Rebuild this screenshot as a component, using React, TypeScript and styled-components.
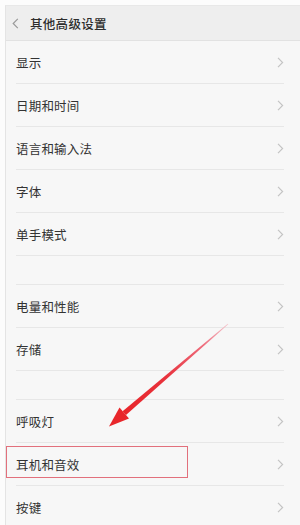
import React from "react";
import styled, { createGlobalStyle } from "styled-components";

const Global = createGlobalStyle`
  html, body { margin: 0; padding: 0; background: #fcfcfc; }
  body { font-family: "Noto Sans CJK SC", "Noto Sans", sans-serif; }
`;

const Screen = styled.div`
  position: relative;
  width: 300px;
  height: 525px;
  overflow: hidden;
  background: #fcfcfc;
  padding-top: 5px;
  padding-left: 5px;
  box-sizing: border-box;
`;

const Frame = styled.div`
  border-left: 1px solid #e4e4e4;
  border-top: 1px solid #e8e8e8;
  height: 100%;
  background: #f7f7f7;
`;

const Header = styled.div`
  height: 34px;
  display: flex;
  align-items: center;
  background: #eeeeee;
  border-bottom: 1px solid #e2e2e2;
  padding-left: 6px;
  gap: 11px;
`;

const Title = styled.div`
  font-size: 12.5px;
  font-weight: 500;
  color: #2e2e2e;
  letter-spacing: 0.3px;
`;

const Row = styled.div`
  position: relative;
  height: 43px;
  display: flex;
  align-items: center;
  justify-content: space-between;
  padding: 0 16px 0 10px;
  box-sizing: border-box;
  &::after {
    content: "";
    position: absolute;
    left: 10px;
    right: 16px;
    bottom: 0;
    height: 1px;
    background: #e7e7e7;
  }
`;

const Spacer = styled.div`
  position: relative;
  height: 29px;
  &::after {
    content: "";
    position: absolute;
    left: 10px;
    right: 16px;
    bottom: 0;
    height: 1px;
    background: #e7e7e7;
  }
`;

const Label = styled.span`
  font-size: 12.5px;
  color: #333333;
  letter-spacing: 0.2px;
`;

const Highlight = styled.div`
  position: absolute;
  left: 0px;
  top: 3px;
  width: 182px;
  height: 32px;
  border: 1px solid #e2707c;
  box-sizing: border-box;
`;

const Overlay = styled.svg`
  position: absolute;
  left: 0;
  top: 0;
  pointer-events: none;
`;

const Chevron = ({ color = "#c4c4c4" }: { color?: string }) => (
  <svg width="7" height="11" viewBox="0 0 7 11">
    <path d="M1 0.8 L5.6 5.5 L1 10.2" fill="none" stroke={color} strokeWidth="1.2" />
  </svg>
);

const Back = () => (
  <svg width="7" height="11" viewBox="0 0 7 11">
    <path d="M5.8 0.8 L1.2 5.5 L5.8 10.2" fill="none" stroke="#9a9a9a" strokeWidth="1.2" />
  </svg>
);

const group1 = ["显示", "日期和时间", "语言和输入法", "字体", "单手模式"];
const group2 = ["电量和性能", "存储"];

export default function App() {
  return (
    <>
      <Global />
      <Screen>
        <Frame>
          <Header>
            <Back />
            <Title>其他高级设置</Title>
          </Header>
          {group1.map((t) => (
            <Row key={t}>
              <Label>{t}</Label>
              <Chevron />
            </Row>
          ))}
          <Spacer />
          {group2.map((t) => (
            <Row key={t}>
              <Label>{t}</Label>
              <Chevron />
            </Row>
          ))}
          <Spacer />
          <Row>
            <Label>呼吸灯</Label>
            <Chevron />
          </Row>
          <Row>
            <Highlight />
            <Label>耳机和音效</Label>
            <Chevron />
          </Row>
          <Row>
            <Label>按键</Label>
            <Chevron />
          </Row>
        </Frame>
        <Overlay width="300" height="525" viewBox="0 0 300 525">
          <defs>
            <linearGradient id="shaft" gradientUnits="userSpaceOnUse" x1="229" y1="324" x2="124" y2="413">
              <stop offset="0" stopColor="#f4c8cf" />
              <stop offset="0.25" stopColor="#ee6a7a" />
              <stop offset="0.6" stopColor="#e8323c" />
              <stop offset="1" stopColor="#e8262b" />
            </linearGradient>
          </defs>
          <polygon
            points="228.3,324.2 227.7,323.8 122.6,411.3 126,415"
            fill="url(#shaft)"
          />
          <polygon points="109,426.5 129,418.5 119.5,407.5" fill="#e8262b" />
        </Overlay>
      </Screen>
    </>
  );
}
